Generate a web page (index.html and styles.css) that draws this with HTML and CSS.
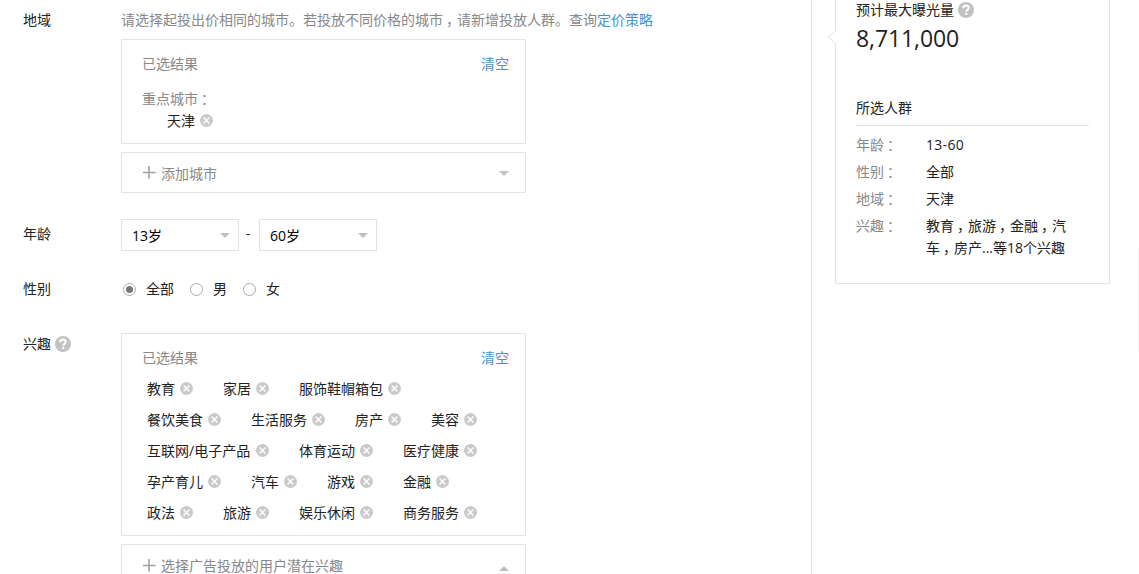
FILE: index.html
```html
<!DOCTYPE html>
<html lang="zh-CN">
<head>
    <meta charset="UTF-8">
    <meta name="viewport" content="width=device-width, initial-scale=1.0">
    <title>投放人群</title>
    <link rel="stylesheet" href="styles.css">
</head>
<body>

<!-- Shared icons -->
<svg class="icon-defs" width="0" height="0">
    <symbol id="icon-remove" viewBox="0 0 13 13">
        <circle cx="6.5" cy="6.5" r="6.5" fill="#cacaca"/>
        <path d="M3.6 3.6l5.8 5.8M9.4 3.6l-5.8 5.8" stroke="#fff" stroke-width="1.4"/>
    </symbol>
    <symbol id="icon-help" viewBox="0 0 16 16">
        <circle cx="8" cy="8" r="8" fill="#c2c2c2"/>
        <path d="M5.2 6.3C5.2 4.4 6.4 3.6 8 3.6s2.7.9 2.7 2.3c0 1.8-2.4 1.9-2.4 3.8" fill="none" stroke="#fff" stroke-width="2"/>
        <rect x="7.2" y="10.9" width="2.1" height="2.1" fill="#fff"/>
    </symbol>
    <symbol id="icon-plus" viewBox="0 0 13 13">
        <path d="M6 0v12.5M0 6.5h12.5" stroke="#a0a0a0" stroke-width="1.6"/>
    </symbol>
</svg>

<div class="page">
    <div class="main">

        <!-- Region -->
        <div class="form-row region-row">
            <div class="label">地域</div>
            <div class="control">
                <p class="hint">请选择起投出价相同的城市。若投放不同价格的城市<span class="punct">，</span>请新增投放人群。查询<a href="#">定价策略</a></p>
                <div class="result-box region-result">
                    <div class="result-head"><span>已选结果</span><a href="#">清空</a></div>
                    <div class="city-title">重点城市<span class="punct">：</span></div>
                    <div class="city-list">
                        <span class="tag">天津<svg><use href="#icon-remove"/></svg></span>
                    </div>
                </div>
                <div class="add-box">
                    <svg class="plus"><use href="#icon-plus"/></svg>
                    <span class="add-text">添加城市</span>
                    <i class="arrow"></i>
                </div>
            </div>
        </div>

        <!-- Age -->
        <div class="form-row age-row">
            <div class="label">年龄</div>
            <div class="control age-control">
                <div class="select"><span>13岁</span><i class="arrow"></i></div>
                <span class="dash">-</span>
                <div class="select"><span>60岁</span><i class="arrow"></i></div>
            </div>
        </div>

        <!-- Gender -->
        <div class="form-row gender-row">
            <div class="label">性别</div>
            <div class="control gender-control">
                <label class="radio checked"><i></i>全部</label>
                <label class="radio"><i></i>男</label>
                <label class="radio"><i></i>女</label>
            </div>
        </div>

        <!-- Interests -->
        <div class="form-row interest-row">
            <div class="label">兴趣<svg class="help"><use href="#icon-help"/></svg></div>
            <div class="control">
                <div class="result-box interest-result">
                    <div class="result-head"><span>已选结果</span><a href="#">清空</a></div>
                    <div class="tag-list">
                        <span class="tag">教育<svg><use href="#icon-remove"/></svg></span>
                        <span class="tag">家居<svg><use href="#icon-remove"/></svg></span>
                        <span class="tag">服饰鞋帽箱包<svg><use href="#icon-remove"/></svg></span>
                        <span class="tag">餐饮美食<svg><use href="#icon-remove"/></svg></span>
                        <span class="tag">生活服务<svg><use href="#icon-remove"/></svg></span>
                        <span class="tag">房产<svg><use href="#icon-remove"/></svg></span>
                        <span class="tag">美容<svg><use href="#icon-remove"/></svg></span>
                        <span class="tag wide">互联网/电子产品<svg><use href="#icon-remove"/></svg></span>
                        <span class="tag">体育运动<svg><use href="#icon-remove"/></svg></span>
                        <span class="tag">医疗健康<svg><use href="#icon-remove"/></svg></span>
                        <span class="tag">孕产育儿<svg><use href="#icon-remove"/></svg></span>
                        <span class="tag">汽车<svg><use href="#icon-remove"/></svg></span>
                        <span class="tag">游戏<svg><use href="#icon-remove"/></svg></span>
                        <span class="tag">金融<svg><use href="#icon-remove"/></svg></span>
                        <span class="tag">政法<svg><use href="#icon-remove"/></svg></span>
                        <span class="tag">旅游<svg><use href="#icon-remove"/></svg></span>
                        <span class="tag">娱乐休闲<svg><use href="#icon-remove"/></svg></span>
                        <span class="tag">商务服务<svg><use href="#icon-remove"/></svg></span>
                    </div>
                </div>
                <div class="add-box open">
                    <svg class="plus"><use href="#icon-plus"/></svg>
                    <span>选择广告投放的用户潜在兴趣</span>
                    <i class="arrow up"></i>
                </div>
            </div>
        </div>
    </div>

    <!-- Estimate card -->
    <div class="side">
        <div class="card">
            <svg class="pointer" width="9" height="16" viewBox="0 0 9 16">
                <path d="M9 1L1.5 8L9 15" fill="#fff" stroke="#e3e3e3"/>
            </svg>
            <div class="card-title">预计最大曝光量<svg class="help"><use href="#icon-help"/></svg></div>
            <div class="count">8,711,000</div>
            <h3>所选人群</h3>
            <dl>
                <dt>年龄<span class="punct">：</span></dt>
                <dd class="range">13-60</dd>
                <dt>性别<span class="punct">：</span></dt>
                <dd>全部</dd>
                <dt>地域<span class="punct">：</span></dt>
                <dd>天津</dd>
                <dt>兴趣<span class="punct">：</span></dt>
                <dd>教育<span class="punct">，</span>旅游<span class="punct">，</span>金融<span class="punct">，</span>汽<br>车<span class="punct">，</span>房产...等18个兴趣</dd>
            </dl>
        </div>
    </div>
    <div class="scroll-edge"></div>
</div>

</body>
</html>
```

FILE: styles.css
```css
* {
    box-sizing: border-box;
}

body {
    margin: 0;
    height: 574px;
    overflow: hidden;
    background-color: #fff;
    color: #222;
    font-family: "Open Sans", "Noto Sans CJK SC", sans-serif;
    font-size: 14px;
    line-height: 20px;
}

a {
    color: #4495c8;
    text-decoration: none;
}

p, h3, dl, dd {
    margin: 0;
}

svg {
    display: block;
    flex: none;
}

.icon-defs {
    position: absolute;
}

.page {
    display: flex;
    height: 574px;
}

.main {
    width: 812px;
    padding: 10px 0 0 23px;
    border-right: 1px solid #e6e6e6;
    overflow: hidden;
}

/* Form rows */
.form-row {
    display: flex;
}

.label {
    display: flex;
    flex: none;
    width: 98px;
}

.control {
    width: 405px;
}

.help {
    width: 16px;
    height: 16px;
    margin: 2px 0 0 4px;
}

/* Half width glyph centred in a full width cell */
.punct {
    padding: 0 4px 0 3px;
    font-feature-settings: "halt";
}

.hint {
    margin-bottom: 9px;
    color: #888;
    white-space: nowrap;
}

.result-box {
    padding: 14px 16px 0 20px;
    border: 1px solid #e3e3e3;
}

.region-result {
    height: 105px;
}

.result-head {
    display: flex;
    justify-content: space-between;
    color: #888;
}

.city-title {
    margin-top: 15px;
    color: #888;
}

.city-list {
    display: flex;
    margin-top: 2px;
    padding-left: 25px;
}

.tag {
    display: flex;
    align-items: flex-start;
    margin-right: 30px;
}

.tag svg {
    width: 13px;
    height: 13px;
    margin: 3px 0 0 5px;
}

.tag.wide {
    justify-content: space-between;
    width: 122px;
}

.add-box {
    display: flex;
    align-items: center;
    height: 41px;
    margin-top: 8px;
    padding: 0 16px 0 21px;
    border: 1px solid #e3e3e3;
    color: #888;
}

.add-box .plus {
    width: 13px;
    height: 13px;
    margin-right: 5px;
}

.add-text {
    padding-top: 2px;
}

.arrow {
    margin: 2px 0 0 auto;
    border: 5px solid transparent;
    border-top-color: #c0c0c0;
    border-bottom: none;
}

.arrow.up {
    border-top: none;
    border-bottom: 5px solid #c0c0c0;
}

/* Age */
.age-row {
    margin-top: 26px;
}

.age-row .label {
    padding-top: 5px;
}

.age-control {
    display: flex;
}

.select {
    display: flex;
    align-items: center;
    width: 118px;
    height: 32px;
    padding: 0 8px 0 10px;
    border: 1px solid #e3e3e3;
    color: #000;
}

.select span {
    padding-top: 2px;
}

.select .arrow {
    margin-top: 0;
}

.dash {
    width: 20px;
    padding: 5px 2px 0 0;
    text-align: center;
}

/* Gender */
.gender-row {
    margin-top: 28px;
}

.gender-control {
    display: flex;
    padding-left: 2px;
}

.radio {
    display: flex;
    align-items: center;
    margin-right: 16px;
}

.radio i {
    width: 13px;
    height: 13px;
    margin-right: 10px;
    border: 1px solid #aaa;
    border-radius: 50%;
}

.radio.checked i {
    padding: 2px;
    background: #777 content-box;
}

/* Interests */
.interest-row {
    margin-top: 34px;
}

.interest-row .label {
    padding-top: 1px;
}

.interest-result {
    height: 203px;
}

.tag-list {
    display: flex;
    flex-wrap: wrap;
    margin-top: 11px;
    padding-left: 5px;
    row-gap: 11px;
}

.add-box.open {
    height: 60px;
    align-items: flex-start;
    padding-top: 11px;
}

.add-box.open .plus {
    margin-top: 3px;
}

.add-box.open .arrow {
    margin-top: 10px;
}

/* Estimate card */
.side {
    padding-left: 23px;
}

.card {
    position: relative;
    width: 275px;
    height: 284px;
    padding: 0 20px;
    border: 1px solid #e3e3e3;
    border-top: none;
}

.pointer {
    position: absolute;
    left: -9px;
    top: 29px;
}

.card-title {
    display: flex;
}

.count {
    margin-top: 3px;
    font-size: 23px;
    line-height: 30px;
    letter-spacing: -0.1px;
}

.card h3 {
    margin-top: 45px;
    padding-bottom: 7px;
    border-bottom: 1px solid #e3e3e3;
    font-size: 14px;
    font-weight: normal;
}

.card dl {
    display: grid;
    grid-template-columns: 70px 1fr;
    row-gap: 5px;
    margin-top: 8px;
    line-height: 22px;
}

.card dt {
    color: #888;
}

.card .range {
    letter-spacing: 0.3px;
}

.scroll-edge {
    width: 1px;
    height: 104px;
    margin: 248px 0 0 auto;
    background-color: #f3f3f3;
}
```
